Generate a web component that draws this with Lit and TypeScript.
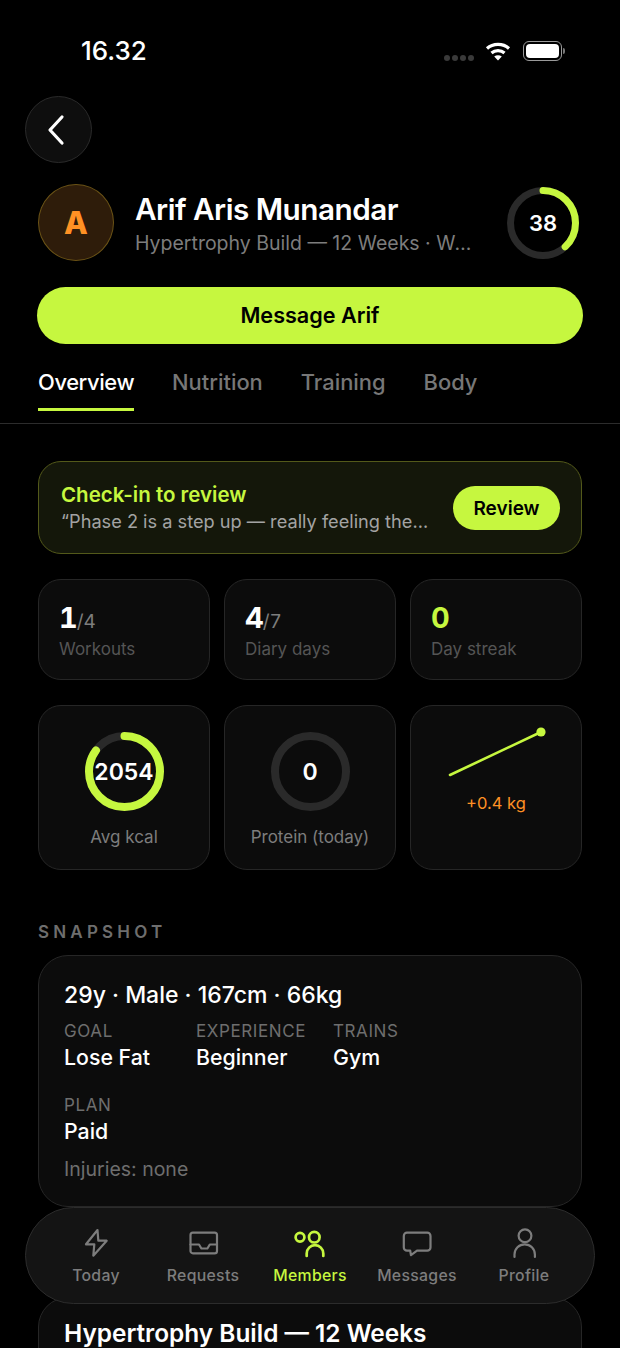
import { LitElement, css, html, svg } from 'lit';
import { customElement } from 'lit/decorators.js';

// ring drawn with a round-capped arc, starts at 12 o'clock
function ring(size: number, stroke: number, pct: number, start = 0) {
  const r = (size - stroke) / 2;
  const c = 2 * Math.PI * r;
  const mid = size / 2;
  return html`<svg class="ring-svg" width=${size} height=${size} viewBox="0 0 ${size} ${size}">
    <circle cx=${mid} cy=${mid} r=${r} fill="none" stroke="#2a2a2a" stroke-width=${stroke}></circle>
    ${pct > 0
      ? svg`<circle cx=${mid} cy=${mid} r=${r} fill="none" stroke="#c6f73f" stroke-width=${stroke}
          stroke-linecap="round" stroke-dasharray="${c * pct} ${c}"
          transform="rotate(${start - 90} ${mid} ${mid})"></circle>`
      : ''}
  </svg>`;
}

const NAV = [
  {
    label: 'Today',
    icon: svg`<path d="M17.5 3 6 17.3h8.3l-1 11.4 13.4-15h-8.4z" />`,
  },
  {
    label: 'Requests',
    icon: svg`<rect x="3.5" y="5.7" width="26.5" height="20.6" rx="2.4" /><path d="M3.5 17.5H12l2.4 4h6l2.4-4H30" />`,
  },
  {
    label: 'Members',
    active: true,
    icon: svg`<circle cx="6" cy="10.3" r="4.4" /><circle cx="20.3" cy="10.2" r="5.3" /><path d="M12.7 29v-2.5a8.3 8.3 0 0 1 16.6 0V29" />`,
  },
  {
    label: 'Messages',
    icon: svg`<path d="M6 5.7h20.3a3.2 3.2 0 0 1 3.2 3.2v11.6a3.2 3.2 0 0 1-3.2 3.2H16l-6 4.5-.8-4.5H6a3.2 3.2 0 0 1-3.2-3.2V8.9A3.2 3.2 0 0 1 6 5.7z" />`,
  },
  {
    label: 'Profile',
    icon: svg`<circle cx="17" cy="8.7" r="6.4" /><path d="M6.5 30v-2.5a10.2 10.2 0 0 1 20.4 0V30" />`,
  },
];

@customElement('app-root')
export class AppRoot extends LitElement {
  render() {
    return html`
      <div class="page">
        <div class="status">
          <span class="time">16.32</span>
          <div class="status-icons">
            <div class="dots"><i></i><i></i><i></i><i></i></div>
            <svg width="26" height="20" viewBox="0 0 26 20" fill="none" stroke="#fff" stroke-width="3.2">
              <path d="M2 7.5C8 2 18 2 24 7.5" />
              <path d="M6.5 12c3.6-3.2 9.4-3.2 13 0" />
              <path d="M13 19.5 9.2 15.4c2.2-1.6 5.4-1.6 7.6 0z" fill="#fff" stroke="none" />
            </svg>
            <div class="battery"><div class="battery-fill"></div></div>
            <div class="battery-tip"></div>
          </div>
        </div>

        <div class="back-row">
          <button class="back">
            <svg width="24" height="32" viewBox="0 0 24 32" fill="none" stroke="#fff" stroke-width="3.2" stroke-linecap="round" stroke-linejoin="round">
              <path d="M18 3 6 16l12 13" />
            </svg>
          </button>
        </div>

        <div class="head">
          <div class="avatar">A</div>
          <div class="who">
            <div class="name">Arif Aris Munandar</div>
            <div class="plan">Hypertrophy Build — 12 Weeks · Week 5</div>
          </div>
          <div class="ring score">${ring(72, 7, 0.38)}<span>38</span></div>
        </div>

        <button class="cta">Message Arif</button>

        <div class="tabs">
          <div class="tab on">Overview</div>
          <div class="tab">Nutrition</div>
          <div class="tab">Training</div>
          <div class="tab">Body</div>
        </div>

        <div class="content">
          <div class="checkin">
            <div class="checkin-text">
              <div class="checkin-title">Check-in to review</div>
              <div class="checkin-quote">“Phase 2 is a step up — really feeling the burn this week</div>
            </div>
            <button class="review">Review</button>
          </div>

          <div class="grid stats">
            <div class="card stat"><div class="num">1<small>/4</small></div><div class="lbl">Workouts</div></div>
            <div class="card stat"><div class="num">4<small>/7</small></div><div class="lbl">Diary days</div></div>
            <div class="card stat"><div class="num lime">0</div><div class="lbl">Day streak</div></div>
          </div>

          <div class="grid gauges">
            <div class="card gauge">
              <div class="ring kcal">${ring(79, 8, 0.85)}<span>2054</span></div>
              <div class="gauge-lbl">Avg kcal</div>
            </div>
            <div class="card gauge">
              <div class="ring kcal">${ring(79, 8, 0)}<span>0</span></div>
              <div class="gauge-lbl">Protein (today)</div>
            </div>
            <div class="card gauge weight">
              <svg width="100" height="52" viewBox="0 0 100 52" fill="none">
                <path d="M4 48 95 5" stroke="#c6f73f" stroke-width="2.6" stroke-linecap="round" />
                <circle cx="95" cy="5" r="4.6" fill="#c6f73f" />
              </svg>
              <div class="delta">+0.4 kg</div>
            </div>
          </div>

          <div class="section">SNAPSHOT</div>

          <div class="card panel">
            <div class="panel-head">29y · Male · 167cm · 66kg</div>
            <div class="facts">
              <div class="fact goal"><div class="k">GOAL</div><div class="v">Lose Fat</div></div>
              <div class="fact exp"><div class="k">EXPERIENCE</div><div class="v">Beginner</div></div>
              <div class="fact"><div class="k">TRAINS</div><div class="v">Gym</div></div>
            </div>
            <div class="fact plan-fact"><div class="k">PLAN</div><div class="v">Paid</div></div>
            <div class="injuries">Injuries: none</div>
          </div>

          <div class="card panel next">
            <div class="next-title">Hypertrophy Build — 12 Weeks</div>
          </div>
        </div>

        <nav class="nav">
          ${NAV.map(
            (n) => html`<div class="nav-item ${n.active ? 'active' : ''}">
              <svg width="32" height="32" viewBox="0 0 32 32" fill="none" stroke="currentColor" stroke-width=${n.active ? 2.7 : 2.2} stroke-linecap="round" stroke-linejoin="round">${n.icon}</svg>
              <span>${n.label}</span>
            </div>`,
          )}
        </nav>
      </div>
    `;
  }

  static styles = css`
    :host {
      display: block;
      --lime: #c6f73f;
      font-family: Inter, 'Liberation Sans', sans-serif;
      color: #fff;
    }
    * {
      box-sizing: border-box;
    }
    button {
      font-family: inherit;
      border: none;
      padding: 0;
    }
    .page {
      position: relative;
      height: 1348px;
      overflow: hidden;
      background: #000;
    }
    .status {
      height: 96px;
      padding: 37px 55px 0 81px;
      display: flex;
      justify-content: space-between;
      align-items: flex-start;
    }
    .time {
      font-size: 26px;
      line-height: 28px;
      font-weight: 500;
    }
    .status-icons {
      display: flex;
      align-items: center;
      height: 28px;
    }
    .dots {
      display: flex;
      gap: 2px;
      margin-top: 13px;
      margin-right: 11px;
    }
    .dots i {
      width: 6px;
      height: 6px;
      border-radius: 50%;
      background: #3a3a3a;
    }
    .battery {
      margin-left: 12px;
      width: 39px;
      height: 20px;
      border: 1.5px solid #9a9a9a;
      border-radius: 6px;
      padding: 2px;
    }
    .battery-fill {
      width: 100%;
      height: 100%;
      background: #fff;
      border-radius: 4px;
    }
    .battery-tip {
      width: 2px;
      height: 6px;
      margin-left: 1px;
      background: #777;
      border-radius: 0 2px 2px 0;
    }
    .back-row {
      padding-left: 25px;
      height: 88px;
    }
    .back {
      width: 67px;
      height: 67px;
      border-radius: 50%;
      background: #0e0e0e;
      border: 1px solid #2a2a2a;
      display: flex;
      align-items: center;
      justify-content: center;
      padding-right: 6px;
    }
    .head {
      display: flex;
      align-items: center;
      padding: 0 41px 0 38px;
      height: 77px;
    }
    .avatar {
      flex: none;
      width: 76px;
      height: 77px;
      border-radius: 50%;
      background: #2e1c0a;
      border: 1px solid #6b5316;
      color: #ff9124;
      font-size: 31px;
      font-weight: 800;
      display: flex;
      align-items: center;
      justify-content: center;
    }
    .who {
      flex: 1;
      min-width: 0;
      margin-left: 21px;
      margin-right: 32px;
      padding-top: 2px;
    }
    .name {
      font-size: 29.7px;
      line-height: 36px;
      font-weight: 600;
      letter-spacing: -0.5px;
      white-space: nowrap;
    }
    .plan {
      margin-top: 3px;
      font-size: 19.5px;
      line-height: 26px;
      color: #7d7d7d;
      white-space: nowrap;
      overflow: hidden;
      text-overflow: ellipsis;
    }
    .ring {
      position: relative;
      flex: none;
      display: flex;
      align-items: center;
      justify-content: center;
    }
    .ring-svg {
      display: block;
    }
    .ring span {
      position: absolute;
      inset: 0;
      display: flex;
      align-items: center;
      justify-content: center;
      font-weight: 600;
    }
    .score span {
      font-size: 22px;
    }
    .cta {
      display: block;
      margin: 26px 37px 0;
      width: 546px;
      height: 57px;
      padding-bottom: 2px;
      border-radius: 29px;
      background: var(--lime);
      color: #000;
      font-size: 21.6px;
      font-weight: 600;
    }
    .tabs {
      display: flex;
      gap: 38px;
      padding: 0 38px;
      margin-top: 21px;
      height: 59px;
      border-bottom: 1px solid #2c2c2c;
    }
    .tab {
      height: 46px;
      padding-top: 3px;
      font-size: 21.9px;
      line-height: 28px;
      font-weight: 500;
      color: #777;
      white-space: nowrap;
    }
    .tab.on {
      width: 96px;
      color: #fff;
      letter-spacing: -0.4px;
      border-bottom: 3px solid var(--lime);
    }
    .content {
      padding: 37px 38px 0;
    }
    .checkin {
      height: 93px;
      border-radius: 23px;
      border: 1px solid #53591a;
      background: #14170a;
      display: flex;
      align-items: center;
      padding: 0 21px 0 22px;
      gap: 24px;
    }
    .checkin-text {
      flex: 1;
      min-width: 0;
    }
    .checkin-title {
      font-size: 20.5px;
      line-height: 26px;
      font-weight: 600;
      color: var(--lime);
    }
    .checkin-quote {
      font-size: 18.2px;
      line-height: 26px;
      color: #a3a3a3;
      white-space: nowrap;
      overflow: hidden;
      text-overflow: ellipsis;
    }
    .review {
      flex: none;
      width: 107px;
      height: 44px;
      padding-top: 1px;
      border-radius: 22px;
      background: var(--lime);
      color: #000;
      font-size: 19px;
      font-weight: 600;
    }
    .grid {
      display: grid;
      grid-template-columns: repeat(3, 1fr);
      gap: 14px;
    }
    .card {
      background: #0c0c0c;
      border: 1px solid #262626;
      border-radius: 23px;
    }
    .stats {
      margin-top: 25px;
    }
    .stat {
      height: 101px;
      padding: 20px 20px 0;
    }
    .num {
      height: 36px;
      font-size: 29px;
      line-height: 36px;
      font-weight: 700;
      font-feature-settings: 'tnum';
      letter-spacing: -1px;
    }
    .num small {
      font-size: 19px;
      font-weight: 400;
      color: #7d7d7d;
      letter-spacing: 0;
    }
    .num.lime {
      color: var(--lime);
    }
    .lbl {
      margin-top: 1px;
      font-size: 17px;
      line-height: 24px;
      color: #555;
    }
    .gauges {
      margin-top: 25px;
    }
    .gauge {
      height: 165px;
      padding-top: 26px;
      display: flex;
      flex-direction: column;
      align-items: center;
    }
    .kcal span {
      font-size: 23px;
      font-weight: 600;
    }
    .gauge-lbl {
      margin-top: 14px;
      font-size: 17px;
      line-height: 24px;
      color: #7d7d7d;
    }
    .weight {
      padding-top: 21px;
    }
    .delta {
      margin-top: 12px;
      font-size: 16.5px;
      line-height: 24px;
      color: #ff9124;
    }
    .section {
      margin-top: 51px;
      font-size: 17px;
      line-height: 22px;
      font-weight: 600;
      letter-spacing: 4.2px;
      color: #6e6e6e;
    }
    .panel {
      margin-top: 12px;
      padding: 23px 25px 0;
      height: 252px;
      border-radius: 30px;
    }
    .panel-head {
      font-size: 23px;
      line-height: 32px;
      font-weight: 500;
    }
    .facts {
      display: flex;
      margin-top: 9px;
    }
    .goal {
      width: 132px;
    }
    .exp {
      width: 137px;
    }
    .k {
      font-size: 17px;
      line-height: 23px;
      letter-spacing: 0.6px;
      color: #6e6e6e;
    }
    .v {
      font-size: 21.3px;
      line-height: 28px;
      font-weight: 500;
    }
    .plan-fact {
      margin-top: 23px;
    }
    .injuries {
      margin-top: 11px;
      font-size: 19.5px;
      line-height: 26px;
      color: #6e6e6e;
    }
    .next {
      margin-top: 90px;
      height: 120px;
      padding-top: 19px;
    }
    .next-title {
      font-size: 24.4px;
      line-height: 32px;
      font-weight: 600;
    }
    .nav {
      position: absolute;
      left: 25px;
      top: 1207px;
      width: 570px;
      height: 97px;
      border-radius: 49px;
      background: #141414;
      border: 1px solid #2c2c2c;
      display: grid;
      grid-template-columns: repeat(5, 107px);
      padding: 0 16.5px;
    }
    .nav-item {
      display: flex;
      flex-direction: column;
      align-items: center;
      padding-top: 19px;
      color: #7d7d7d;
    }
    .nav-item span {
      margin-top: 6px;
      font-size: 15.8px;
      line-height: 22px;
      font-weight: 500;
      letter-spacing: 0.3px;
      white-space: nowrap;
    }
    .nav-item.active {
      color: var(--lime);
    }
  `;
}

declare global {
  interface HTMLElementTagNameMap {
    'app-root': AppRoot;
  }
}
